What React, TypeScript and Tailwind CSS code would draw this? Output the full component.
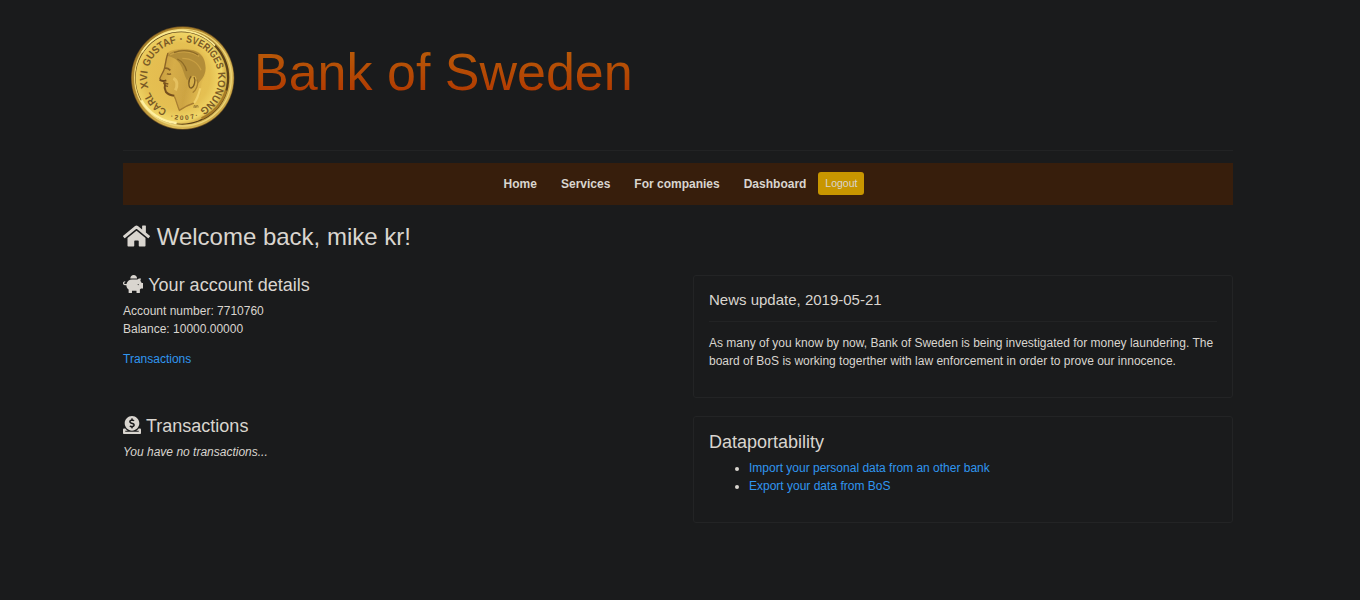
import { FaDonate, FaHome, FaPiggyBank } from "react-icons/fa";

type Word = { text: string; from: number; to: number };

const legend: Word[] = [
  { text: "CARL", from: 206, to: 247 },
  { text: "XVI", from: 254, to: 281 },
  { text: "GUSTAF", from: 288, to: 350 },
  { text: "·", from: 355, to: 361 },
  { text: "SVERIGES", from: 365, to: 436 },
  { text: "KONUNG", from: 441, to: 512 },
];

const CX = 188;
const CY = 189;

function point(deg: number, r: number) {
  const a = (deg * Math.PI) / 180;
  return `${(CX + r * Math.sin(a)).toFixed(2)} ${(CY - r * Math.cos(a)).toFixed(2)}`;
}

function Coin() {
  const r = 107;
  return (
    <svg viewBox="0 0 390 375" className="block h-[125px] w-[130px] shrink-0" aria-hidden="true">
      <defs>
        <linearGradient id="rim" x1="0" y1="0" x2="1" y2="1">
          <stop offset="0" stopColor="#a07a2a" />
          <stop offset="0.35" stopColor="#b0872c" />
          <stop offset="0.7" stopColor="#dcbc58" />
          <stop offset="1" stopColor="#c39c3a" />
        </linearGradient>
        <radialGradient id="field" cx="0.45" cy="0.48" r="0.56">
          <stop offset="0" stopColor="#e3b94e" />
          <stop offset="0.65" stopColor="#e5c052" />
          <stop offset="0.88" stopColor="#f1d768" />
          <stop offset="1" stopColor="#cba03a" />
        </radialGradient>
        <linearGradient id="face" x1="0" y1="0" x2="1" y2="0.3">
          <stop offset="0" stopColor="#c1963b" />
          <stop offset="0.35" stopColor="#d6ad48" />
          <stop offset="0.7" stopColor="#cda443" />
          <stop offset="1" stopColor="#e0b94e" />
        </linearGradient>
        <filter id="soft" x="-10%" y="-10%" width="120%" height="120%">
          <feGaussianBlur stdDeviation="2.2" />
        </filter>
        {legend.map((w, i) => (
          <path
            key={i}
            id={`arc${i}`}
            d={`M${point(w.from, r)} A${r} ${r} 0 0 1 ${point(w.to + 4, r)}`}
          />
        ))}
        <path id="yearArc" d={`M${point(205, 126)} A126 126 0 0 0 ${point(145, 126)}`} />
      </defs>
      <circle cx={CX} cy={CY} r="155" fill="#6b4f22" />
      <circle cx={CX} cy={CY} r="153" fill="url(#rim)" />
      <circle cx="189" cy="188" r="145" fill="none" stroke="#ecd477" strokeWidth="4" />
      <circle cx="187" cy="188" r="141" fill="#5c4217" />
      <circle cx="184" cy="189" r="137" fill="url(#field)" />
      <path d="M66 112 A138 138 0 0 1 285 92" fill="none" stroke="#fbea91" strokeWidth="5" filter="url(#soft)" />
      <path d="M64 256 A138 138 0 0 0 170 324" fill="none" stroke="#fff0a0" strokeWidth="7" filter="url(#soft)" />
      <path d="M318 226 A138 138 0 0 1 245 310" fill="none" stroke="#a87c28" strokeWidth="7" filter="url(#soft)" />
      <g filter="url(#soft)">
        <path
          d="M144 112 C160 101 192 98 218 105 C243 110 255 126 257 151 C261 172 253 190 245 203 L241 240 L222 264 C206 269 190 277 178 288 C174 270 170 258 163 243 C150 241 140 236 137 229 C138 222 132 218 135 211 L130 204 C132 199 127 197 119 194 C119 184 128 173 132 164 C135 148 134 128 144 112Z"
          fill="url(#face)"
        />
        <path
          d="M143 122 C151 108 178 101 211 105 C238 108 254 126 256 151 C260 177 247 192 235 205 C225 199 234 184 222 182 C207 181 206 192 201 196 C192 180 190 162 179 145 C171 132 158 127 143 122Z"
          fill="#b38d38"
        />
        <path d="M150 120 C176 105 214 108 237 124 M187 130 C215 130 235 145 243 166" fill="none" stroke="#c9a044" strokeWidth="4" />
        <path d="M162 113 C187 103 216 106 234 120 M172 132 C188 140 196 152 200 168" fill="none" stroke="#8e6b27" strokeWidth="4" />
        <path d="M214 184 C203 194 205 219 214 219 C223 216 228 196 222 186" fill="#d7b14c" stroke="#7c5b22" strokeWidth="4" />
        <path d="M231 194 C238 206 226 229 218 233" fill="none" stroke="#a8802f" strokeWidth="4" />
        <path d="M133 160 C140 158 146 161 151 166 M141 176 C145 179 149 178 153 176" fill="none" stroke="#896225" strokeWidth="5" />
        <path d="M144 114 C136 136 137 151 132 164 C128 175 121 183 119 193" fill="none" stroke="#8c6428" strokeWidth="4" />
        <path d="M119 194 C125 200 133 198 139 196" fill="none" stroke="#6d481d" strokeWidth="6" />
        <path d="M130 204 L145 207 M135 212 L144 214" fill="none" stroke="#7d5722" strokeWidth="4" />
        <path d="M133 202 L135 211 L134 219 L138 231 C144 238 154 241 163 242" fill="none" stroke="#76501f" strokeWidth="6" />
        <path d="M160 190 C172 195 174 212 166 226" fill="none" stroke="#e5c160" strokeWidth="9" />
        <path d="M163 244 C170 260 173 275 178 286 C194 275 210 268 222 264" fill="none" stroke="#a87e31" strokeWidth="4" />
        <path d="M241 220 C234 245 232 252 222 264" fill="none" stroke="#f0d16d" strokeWidth="6" />
      </g>
      <g
        fill="#7a5a26"
        fontFamily='"Liberation Sans", Arial, sans-serif'
        fontSize="31"
        fontWeight="700"
      >
        {legend.map((w, i) => (
          <text key={i}>
            <textPath
              href={`#arc${i}`}
              textLength={(((w.to - w.from) * Math.PI) / 180) * r}
              lengthAdjust="spacingAndGlyphs"
            >
              {w.text}
            </textPath>
          </text>
        ))}
        <text fontSize="20">
          <textPath href="#yearArc" startOffset="13%" textLength="86">
            ·2007·
          </textPath>
        </text>
      </g>
      <path d="M222 279 v-7 h4 v7 M229 278 v-6 h5 v6" fill="none" stroke="#80602a" strokeWidth="2" />
    </svg>
  );
}

const navItems = ["Home", "Services", "For companies", "Dashboard"];

export default function App() {
  return (
    <div className="min-h-[600px] bg-[#1a1b1c] pl-[123px] font-['Liberation_Sans',Arial,sans-serif] text-xs leading-[18px] text-[#d9d5cf]">
      <div className="w-[1110px]">
        <header className="flex h-[151px] items-start border-b border-[#222324] pt-[15px]">
          <div className="-ml-[3px]">
            <Coin />
          </div>
          <h1 className="ml-[4px] mt-[26px] bg-linear-to-b from-[#b8600b] to-[#b03000] bg-clip-text text-[52px] leading-[62px] text-transparent">
            Bank of Sweden
          </h1>
        </header>

        <nav className="mt-3 flex h-[42px] items-center justify-center bg-[#371e0c]">
          {navItems.map((item) => (
            <a key={item} href="#" className="px-3 font-bold">
              {item}
            </a>
          ))}
          <button className="mb-px h-[23px] w-[46px] rounded-[3px] bg-[#c89600] text-[10.5px] leading-[23px]">
            Logout
          </button>
        </nav>

        <h2 className="mb-6 mt-[17px] flex h-[29px] items-center gap-[6.67px] text-2xl leading-[29px]">
          <FaHome className="mb-0.5 h-6 w-[27px]" />
          Welcome back, mike kr!
        </h2>

        <main className="grid grid-cols-[540px_540px] gap-x-[30px]">
          <section className="h-[141px]">
            <h3 className="mb-[7px] flex h-5 items-center gap-[5px] text-lg leading-5">
              <FaPiggyBank className="mb-0.5 h-[18px] w-[20.25px]" />
              Your account details
            </h3>
            <p>Account number: 7710760</p>
            <p>Balance: 10000.00000</p>
            <a href="#" className="mt-3 block text-[#3096ef]">
              Transactions
            </a>
          </section>

          <section className="h-[123px] rounded-[3px] border border-[#232425] px-[15px] pt-[15px]">
            <h4 className="text-[15px] leading-[18px]">News update, 2019-05-21</h4>
            <hr className="mb-3 mt-3 border-[#222324]" />
            <p>
              As many of you know by now, Bank of Sweden is being investigated for money laundering. The
              board of BoS is working togerther with law enforcement in order to prove our innocence.
            </p>
          </section>

          <section>
            <h3 className="mb-[7px] flex h-5 items-center gap-[5px] text-lg leading-5">
              <FaDonate className="mb-0.5 size-[18px]" />
              Transactions
            </h3>
            <p className="italic">You have no transactions...</p>
          </section>

          <section className="h-[107px] rounded-[3px] border border-[#232425] px-[15px] pt-[15px]">
            <h3 className="mb-[7px] text-lg leading-5">Dataportability</h3>
            <ul className="list-disc pl-10">
              <li>
                <a href="#" className="text-[#3096ef]">
                  Import your personal data from an other bank
                </a>
              </li>
              <li>
                <a href="#" className="text-[#3096ef]">
                  Export your data from BoS
                </a>
              </li>
            </ul>
          </section>
        </main>
      </div>
    </div>
  );
}
